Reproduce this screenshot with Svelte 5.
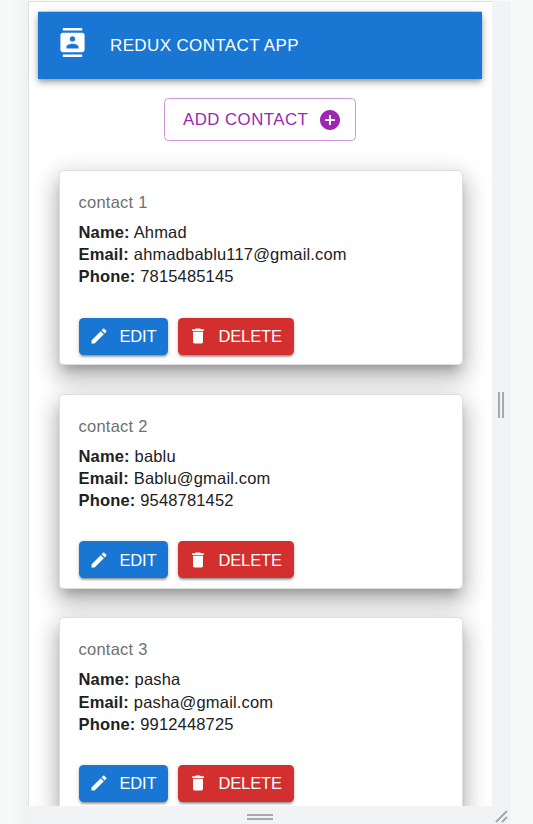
<script>
  const contacts = [
    { id: 1, name: 'Ahmad', email: 'ahmadbablu117@gmail.com', phone: '7815485145' },
    { id: 2, name: 'bablu', email: 'Bablu@gmail.com', phone: '9548781452' },
    { id: 3, name: 'pasha', email: 'pasha@gmail.com', phone: '9912448725' }
  ];
</script>

<div class="workspace">
  <div class="device">
    <main class="screen">
      <header>
        <svg class="logo" viewBox="0 0 24 24"><path d="M20 0H4v2h16V0zM4 24h16v-2H4v2zM20 4H4c-1.100 0-2 .9-2 2v12c0 1.100.9 2 2 2h16c1.100 0 2-.9 2-2V6c0-1.100-.9-2-2-2zm-8 2.750c1.240 0 2.250 1.010 2.250 2.250s-1.010 2.250-2.250 2.250S9.750 10.240 9.750 9 10.760 6.750 12 6.750zM17 17H7v-1.500c0-1.670 3.330-2.500 5-2.500s5 .83 5 2.500V17z" /></svg>
        <span>REDUX CONTACT APP</span>
      </header>
      <button class="add">
        <span>ADD CONTACT</span>
        <svg viewBox="0 0 24 24"><path d="M12 2C6.480 2 2 6.480 2 12s4.480 10 10 10 10-4.480 10-10S17.520 2 12 2zm5 11h-4v4h-2v-4H7v-2h4V7h2v4h4v2z" /></svg>
      </button>
      <section>
        {#each contacts as c (c.id)}
          <article>
            <h2>contact {c.id}</h2>
            <p><b>Name:</b> {c.name}</p>
            <p><b>Email:</b> {c.email}</p>
            <p><b>Phone:</b> {c.phone}</p>
            <div class="actions">
              <button class="edit">
                <svg viewBox="0 0 24 24"><path d="M3 17.250V21h3.750L17.810 9.940l-3.750-3.750L3 17.250zM20.710 7.040c.39-.39.39-1.020 0-1.410l-2.340-2.340c-.39-.39-1.020-.39-1.410 0l-1.830 1.830 3.750 3.750 1.830-1.830z" /></svg>
                <span>EDIT</span>
              </button>
              <button class="delete">
                <svg viewBox="0 0 24 24"><path d="M6 19c0 1.100.9 2 2 2h8c1.100 0 2-.9 2-2V7H6v12zM19 4h-3.500l-1-1h-5l-1 1H5v2h14V4z" /></svg>
                <span>DELETE</span>
              </button>
            </div>
          </article>
        {/each}
      </section>
    </main>
    <div class="rail">
      <svg width="8" height="26" viewBox="0 0 8 26"><path d="M1 0v26M5 0v26" /></svg>
    </div>
    <div class="footer">
      <svg width="26" height="8" viewBox="0 0 26 8"><path d="M0 3h26M0 7h26" /></svg>
    </div>
    <div class="corner">
      <svg width="14" height="14" viewBox="0 0 14 14"><path d="M1 13L12 2M7 13L12 8" /></svg>
    </div>
  </div>
</div>

<style>
  .workspace {
    box-sizing: border-box;
    width: 533px;
    height: 824px;
    padding: 1px 22px 0 28px;
    overflow: hidden;
    background: linear-gradient(90deg, #f8faf9 0, #f7f9f8 12px, #f0f1f1 28px, #f8faf9 28px);
    font-family: "Liberation Sans", Arial, sans-serif;
  }
  .device {
    display: grid;
    grid-template: 805px 18px / 464px 19px;
  }
  .screen {
    box-sizing: border-box;
    overflow: hidden;
    padding: 10px 9px 0;
    border: solid #dfe1e1;
    border-width: 1px 0 0 1px;
    background: #fff;
    display: flex;
    flex-direction: column;
    align-items: center;
  }
  header {
    box-sizing: border-box;
    flex: none;
    align-self: stretch;
    height: 67px;
    margin-right: 1px;
    padding-left: 16px;
    display: flex;
    align-items: center;
    background: #1976d2;
    color: #fff;
    font-size: 17px;
    letter-spacing: 0.37px;
    box-shadow: 0 -1px 0 -0.5px #75ade4, 0 2px 5px -1px rgba(0,0,0,.3), 0 5px 6px rgba(0,0,0,.14), 0 1px 11px rgba(0,0,0,.12);
  }
  svg { display: block; flex: none; fill: currentColor; }
  .logo { width: 29px; height: 29px; margin: -6px 23px 0 4px; }
  button {
    box-sizing: border-box;
    display: flex;
    align-items: center;
    flex: none;
    margin: 0;
    border: 0;
    border-radius: 4.500px;
    font: 16.500px/28px "Liberation Sans", Arial, sans-serif;
    white-space: nowrap;
  }
  .add {
    width: 192px;
    height: 43px;
    margin: 19px 1px 0 0;
    padding: 0 0 0 18px;
    border: 1px solid #cf97d9;
    background: #fff;
    color: #9c27b0;
    font-size: 16.800px;
    letter-spacing: 0.48px;
  }
  .add span { width: 125px; }
  .add svg { width: 24px; height: 24px; margin-left: 10px; }
  section {
    display: flex;
    flex-direction: column;
    gap: 28.700px;
    width: 404px;
    margin-top: 29px;
  }
  article {
    box-sizing: border-box;
    flex: none;
    height: 195px;
    padding: 20px 19px 0;
    border: 1px solid #dedede;
    border-radius: 4.500px;
    background: #fff;
    color: #212121;
    box-shadow: 0 8px 10px -5px rgba(0,0,0,.23), 0 13px 20px 2px rgba(0,0,0,.16), 0 6px 26px 4px rgba(0,0,0,.14);
  }
  h2 {
    margin: 0 0 7px;
    color: #707070;
    font-size: 16.500px;
    font-weight: 400;
    line-height: 23px;
    letter-spacing: 0.25px;
  }
  p {
    margin: 0;
    font-size: 16.500px;
    line-height: 22.200px;
    letter-spacing: 0.17px;
  }
  .actions { display: flex; gap: 10px; margin-top: 30px; }
  .actions button {
    height: 37px;
    padding: 0 0 0 10px;
    color: #fff;
    letter-spacing: -0.15px;
    box-shadow: 0 3px 2px -2px rgba(0,0,0,.25), 0 2px 2px rgba(0,0,0,.18), 0 1px 5px rgba(0,0,0,.16);
  }
  .actions svg { width: 20px; height: 20px; margin-right: 11px; }
  .edit { width: 89px; background: #1976d2; }
  .delete { width: 116px; background: #d32f2f; }
  .rail, .footer, .corner {
    display: flex;
    align-items: center;
    justify-content: center;
    background: #f1f3f4;
  }
  .rail svg, .footer svg, .corner svg { fill: none; stroke: #a7a8aa; stroke-width: 2; }
  .rail svg { margin-top: 2px; }
  .footer svg { margin-top: 2px; }
  .corner svg { margin-top: 1px; }
  .corner { justify-content: flex-end; padding-right: 2px; }
</style>
